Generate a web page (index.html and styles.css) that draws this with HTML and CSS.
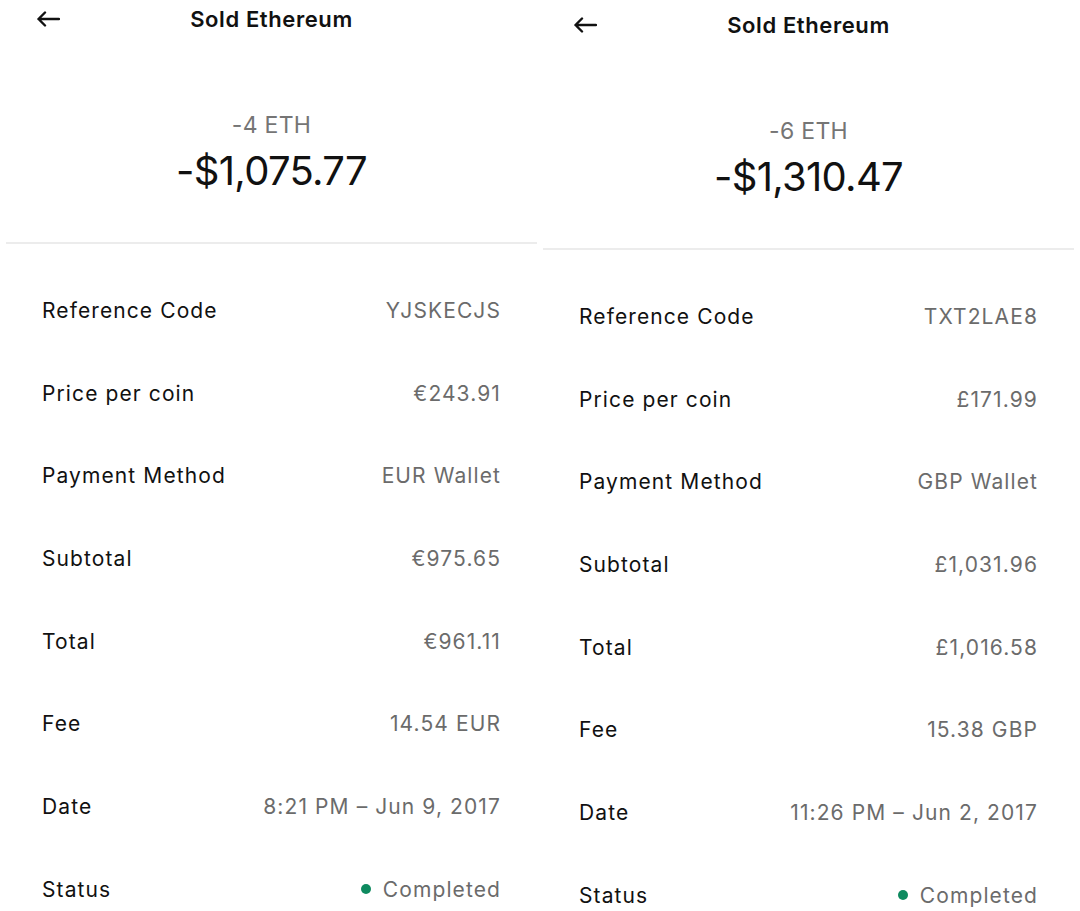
FILE: index.html
```html
<!DOCTYPE html>
<html lang="en">
<head>
    <meta charset="UTF-8">
    <meta name="viewport" content="width=device-width, initial-scale=1.0">
    <title>Sold Ethereum</title>
    <link rel="stylesheet" href="styles.css">
</head>
<body>
    <div class="screens">
        <!-- first transaction -->
        <div class="screen">
            <div class="header">
                <span class="back">
                    <svg width="24" height="16" viewBox="0 0 24 16"><path d="M23 8H2.5M9 1.5L2.5 8L9 14.5" fill="none" stroke="#111" stroke-width="2.4" stroke-linecap="round" stroke-linejoin="round"/></svg>
                </span>
                <h1>Sold Ethereum</h1>
                <span></span>
            </div>
            <div class="hero">
                <div class="coins">-4 ETH</div>
                <div class="amount">-$1,075.77</div>
            </div>
            <ul class="details">
                <li><span class="label">Reference Code</span><span class="value">YJSKECJS</span></li>
                <li><span class="label">Price per coin</span><span class="value">€243.91</span></li>
                <li><span class="label">Payment Method</span><span class="value">EUR Wallet</span></li>
                <li><span class="label">Subtotal</span><span class="value">€975.65</span></li>
                <li><span class="label">Total</span><span class="value">€961.11</span></li>
                <li><span class="label">Fee</span><span class="value">14.54 EUR</span></li>
                <li><span class="label">Date</span><span class="value">8:21 PM – Jun 9, 2017</span></li>
                <li><span class="label">Status</span><span class="value"><span class="dot"></span>Completed</span></li>
            </ul>
        </div>

        <!-- second transaction -->
        <div class="screen screen-lower">
            <div class="header">
                <span class="back">
                    <svg width="24" height="16" viewBox="0 0 24 16"><path d="M23 8H2.5M9 1.5L2.5 8L9 14.5" fill="none" stroke="#111" stroke-width="2.4" stroke-linecap="round" stroke-linejoin="round"/></svg>
                </span>
                <h1>Sold Ethereum</h1>
                <span></span>
            </div>
            <div class="hero">
                <div class="coins">-6 ETH</div>
                <div class="amount">-$1,310.47</div>
            </div>
            <ul class="details">
                <li><span class="label">Reference Code</span><span class="value">TXT2LAE8</span></li>
                <li><span class="label">Price per coin</span><span class="value">£171.99</span></li>
                <li><span class="label">Payment Method</span><span class="value">GBP Wallet</span></li>
                <li><span class="label">Subtotal</span><span class="value">£1,031.96</span></li>
                <li><span class="label">Total</span><span class="value">£1,016.58</span></li>
                <li><span class="label">Fee</span><span class="value">15.38 GBP</span></li>
                <li><span class="label">Date</span><span class="value">11:26 PM – Jun 2, 2017</span></li>
                <li><span class="label">Status</span><span class="value"><span class="dot"></span>Completed</span></li>
            </ul>
        </div>
    </div>
</body>
</html>
```

FILE: styles.css
```css
body {
    margin: 0;
    font-family: Inter, "Noto Sans", sans-serif;
    background-color: #ffffff;
    color: #111111;
    overflow: hidden;
}

.screens {
    display: flex;
    align-items: flex-start;
    gap: 6px;
    padding-left: 6px;
}

.screen {
    width: 531px;
    flex: none;
}

.screen-lower {
    margin-top: 6px;
}

.header {
    display: grid;
    grid-template-columns: 1fr auto 1fr;
    align-items: center;
    height: 38px;
    padding: 0 30px;
}

.back {
    display: flex;
    justify-self: start;
}

.header h1 {
    margin: 0;
    font-size: 22px;
    font-weight: 600;
    line-height: 28px;
    letter-spacing: 0.6px;
}

.hero {
    display: flex;
    flex-direction: column;
    align-items: center;
    gap: 8px;
    padding: 73px 0 47px;
    border-bottom: 2px solid #ececec;
}

.coins {
    font-size: 23px;
    line-height: 28px;
    letter-spacing: 0.3px;
    color: #757575;
}

.amount {
    font-size: 40px;
    line-height: 48px;
    letter-spacing: -0.7px;
}

.details {
    list-style: none;
    margin: 0;
    padding: 25px 36px 0;
}

.details li {
    display: flex;
    justify-content: space-between;
    align-items: center;
    height: 82.7px;
    font-size: 21px;
    letter-spacing: 1.1px;
}

.value {
    display: flex;
    align-items: center;
    color: #6b6b6b;
}

.dot {
    width: 10px;
    height: 10px;
    margin-right: 12px;
    border-radius: 50%;
    background-color: #0e8a5f;
}
```
